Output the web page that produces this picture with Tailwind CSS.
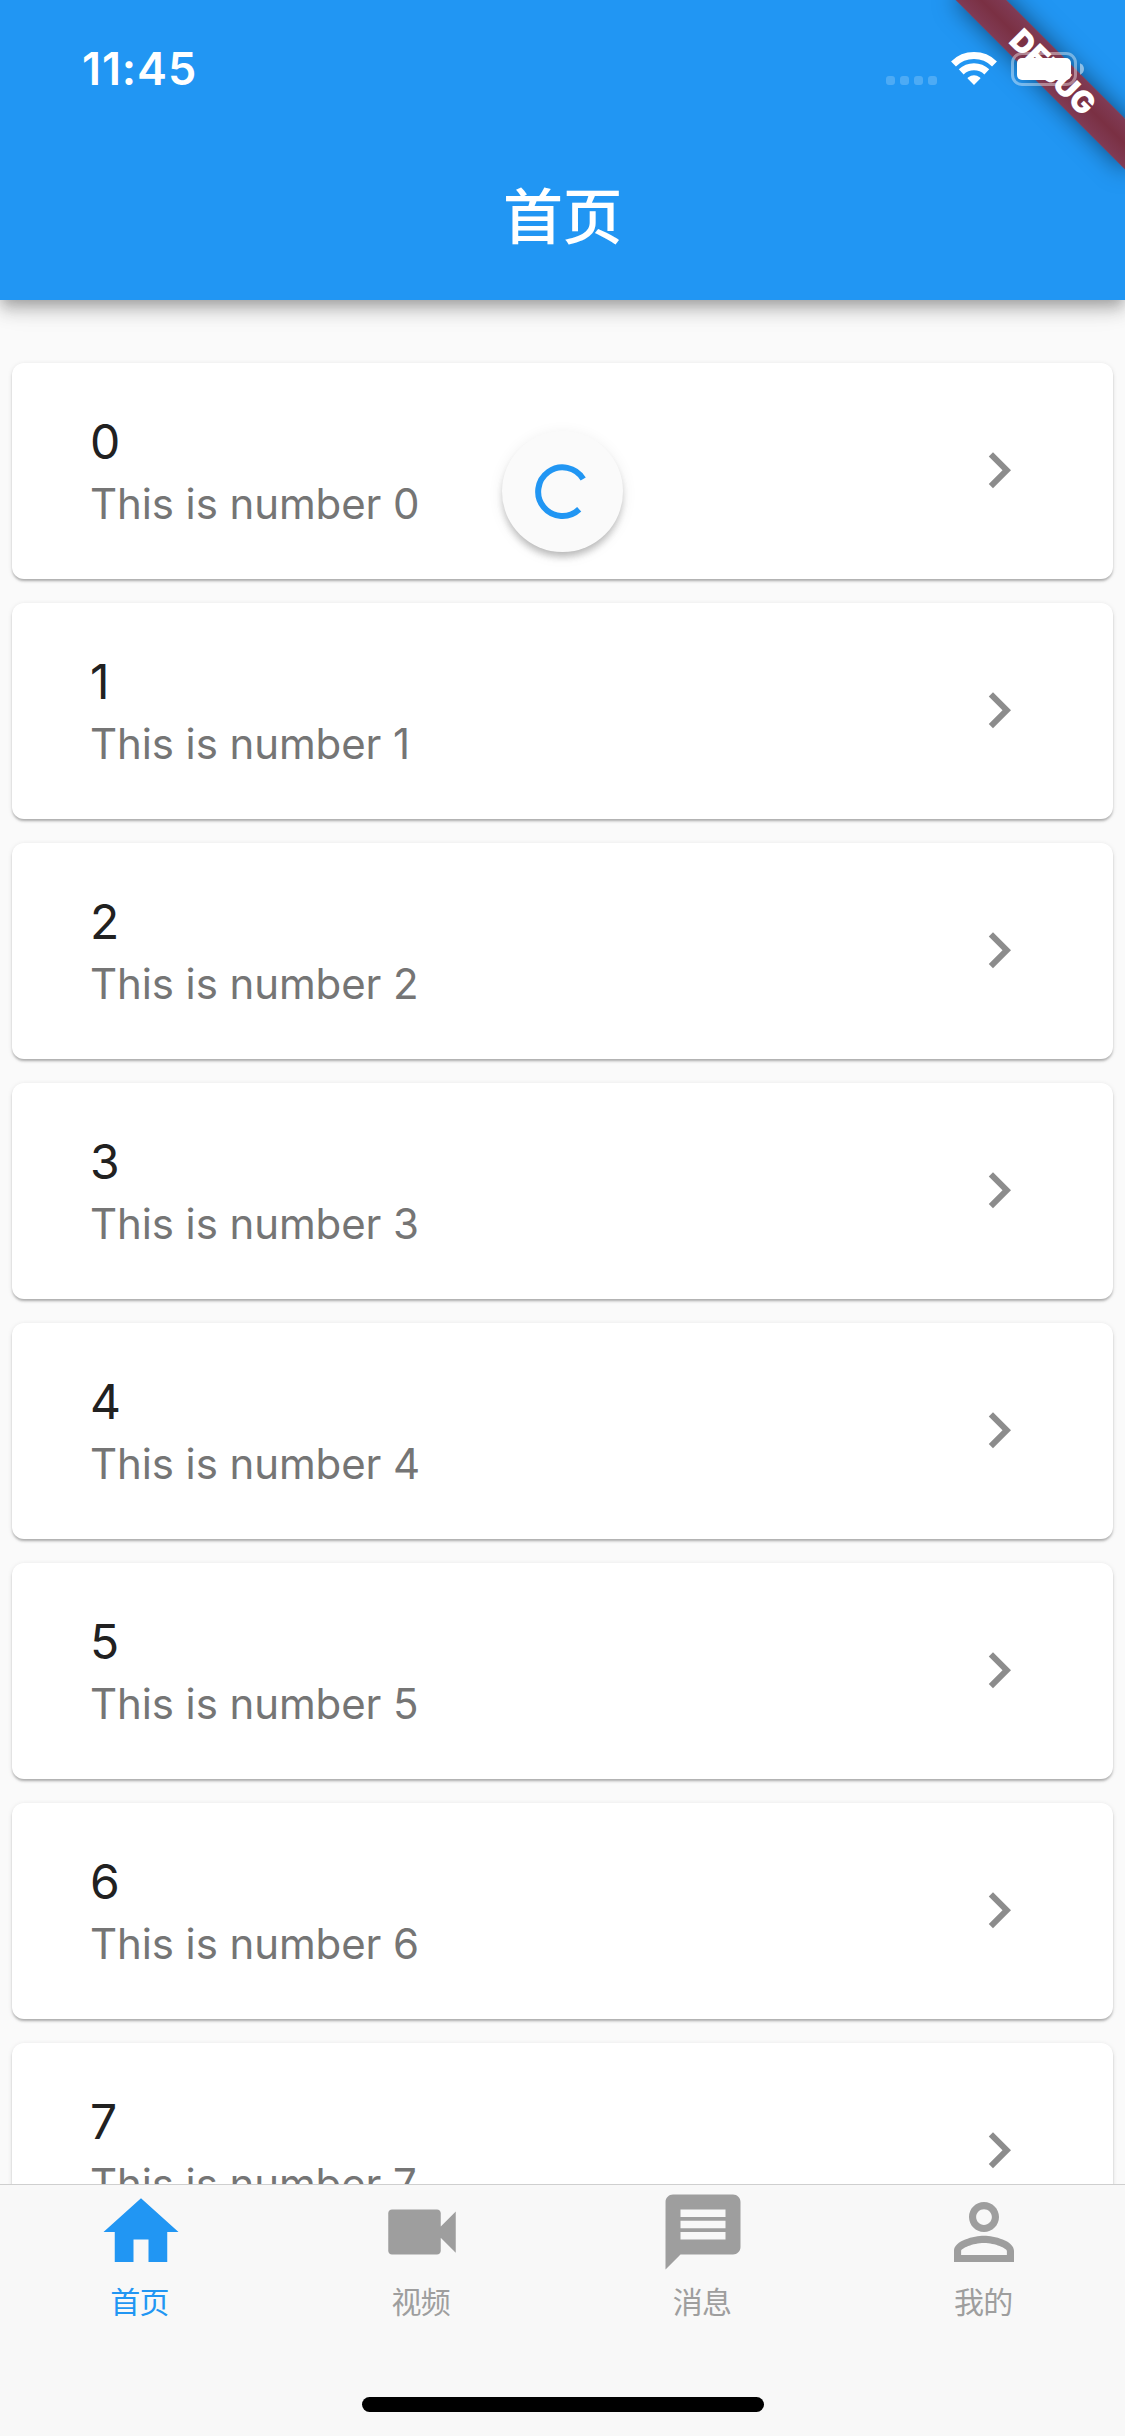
<!DOCTYPE html>
<html lang="zh-CN">
<head>
<meta charset="utf-8">
<title>首页</title>
<script src="https://cdn.jsdelivr.net/npm/@tailwindcss/browser@4"></script>
</head>
<body class="bg-[#fafafa]">
<div class="relative flex h-[2436px] w-[1125px] flex-col overflow-hidden bg-[#fafafa] font-['Inter','Noto_Sans_CJK_SC',sans-serif]">

  <header class="relative z-10 flex h-[300px] shrink-0 flex-col bg-[#2196f3] shadow-[0_6px_12px_-3px_rgba(0,0,0,0.2),0_12px_15px_rgba(0,0,0,0.14),0_3px_30px_rgba(0,0,0,0.12)]">
    <!-- debug ribbon -->
    <div class="absolute right-0 top-0 size-[220px] overflow-hidden">
      <div class="absolute left-[28px] top-[54px] flex h-9 w-[240px] rotate-45 items-center justify-center bg-linear-to-b from-[#803b55] via-[#7a3043] to-[#803b55] text-[30.6px] leading-none font-black text-white shadow-[0_0_24px_rgba(0,0,0,0.5)]">DEBUG</div>
    </div>
    <!-- status bar -->
    <div class="relative flex h-[132px] justify-between pl-[82px] pr-[41px]">
      <span class="pt-[43px] text-[45px] leading-[52px] font-semibold tracking-[0.9px] text-white">11:45</span>
      <div class="flex items-start pt-[52px]">
        <div class="mr-[14px] mt-6 flex gap-[5px]">
          <i class="size-[9px] rounded-[3px] bg-white/20"></i><i class="size-[9px] rounded-[3px] bg-white/20"></i><i class="size-[9px] rounded-[3px] bg-white/20"></i><i class="size-[9px] rounded-[3px] bg-white/20"></i>
        </div>
        <svg class="mr-[14px] h-[34px] w-[46px]" viewBox="0 0 46 34" fill="none">
          <path d="M2.5 11.9A29.3 29.3 0 0 1 43.5 11.9" stroke="#fff" stroke-width="7"/>
          <path d="M10.2 19.9A18.5 18.5 0 0 1 35.8 19.9" stroke="#fff" stroke-width="7"/>
          <path d="M23 33L16.6 26.6Q16.4 26 17 25.6A10 10 0 0 1 29 25.6Q29.6 26 29.4 26.6Z" fill="#fff"/>
        </svg>
        <svg class="h-[34px] w-[73px]" viewBox="0 0 73 34" fill="none">
          <rect x="1.5" y="1.5" width="63" height="31" rx="9.5" stroke="#fff" stroke-opacity=".4" stroke-width="3"/>
          <rect x="6" y="6" width="54" height="22" rx="5" fill="#fff"/>
          <path d="M69 11.2C71.5 12.2 73 14.4 73 17S71.5 21.800 69 22.800Z" fill="#fff" fill-opacity=".5"/>
        </svg>
      </div>
    </div>
    <h1 class="flex h-[168px] items-center justify-center pt-0.5 text-[60px] leading-none font-medium tracking-[-0.5px] text-white">首页</h1>
  </header>

  <main id="list" class="relative flex min-h-0 flex-1 flex-col gap-6 overflow-hidden px-3 pt-[63px]">
    <div class="absolute left-[502px] top-[131px] size-[121px] rounded-full bg-[#fafafa] shadow-[0_6px_9px_-3px_rgba(0,0,0,0.2),0_6px_6px_rgba(0,0,0,0.08),0_3px_15px_rgba(0,0,0,0.08)]">
      <svg class="size-full" viewBox="0 0 121 121" fill="none"><path d="M77.200 78.300A24.300 24.300 0 1 1 81.200 48" stroke="#2196f3" stroke-width="6"/></svg>
    </div>
  </main>

  <nav class="relative grid h-[252px] shrink-0 grid-cols-4 border-t border-[#cfcfcf] bg-[#f8f8f8] text-[#9e9e9e]">
    <div class="flex flex-col items-center pt-[2px] text-[#2196f3]">
      <svg class="size-[90px]" viewBox="0 0 24 24" fill="currentColor"><path d="M10 20v-6h4v6h5v-8h3L12 3 2 12h3v8z"/></svg>
      <span class="pr-0.5 pt-[3px] text-[30px] leading-[44px] tracking-[-0.72px]">首页</span>
    </div>
    <div class="flex flex-col items-center pt-[2px]">
      <svg class="size-[90px]" viewBox="0 0 24 24" fill="currentColor"><path d="M17 10.500V7c0-.55-.45-1-1-1H4c-.55 0-1 .45-1 1v10c0 .55.45 1 1 1h12c.55 0 1-.45 1-1v-3.500l4 4v-11l-4 4z"/></svg>
      <span class="pr-0.5 pt-[3px] text-[30px] leading-[44px] tracking-[-0.72px]">视频</span>
    </div>
    <div class="flex flex-col items-center pt-[2px]">
      <svg class="size-[90px]" viewBox="0 0 24 24" fill="currentColor"><path d="M20 2H4c-1.100 0-1.990.9-1.990 2L2 22l4-4h14c1.100 0 2-.9 2-2V4c0-1.100-.9-2-2-2zm-2 12H6v-2h12v2zm0-3H6V9h12v2zm0-3H6V6h12v2z"/></svg>
      <span class="pr-0.5 pt-[3px] text-[30px] leading-[44px] tracking-[-0.72px]">消息</span>
    </div>
    <div class="flex flex-col items-center pt-[2px]">
      <svg class="size-[90px]" viewBox="0 0 24 24" fill="currentColor"><path d="M12 5.900c1.160 0 2.100.94 2.100 2.100s-.94 2.100-2.100 2.100S9.900 9.160 9.900 8s.94-2.100 2.100-2.100m0 9c2.970 0 6.100 1.460 6.100 2.100v1.100H5.900V17c0-.64 3.130-2.100 6.100-2.100M12 4C9.790 4 8 5.790 8 8s1.790 4 4 4 4-1.790 4-4-1.790-4-4-4zm0 9c-2.670 0-8 1.340-8 4v3h16v-3c0-2.660-5.330-4-8-4z"/></svg>
      <span class="pr-0.5 pt-[3px] text-[30px] leading-[44px] tracking-[-0.72px]">我的</span>
    </div>
    <div class="absolute bottom-6 left-[362px] h-[15px] w-[402px] rounded-full bg-black"></div>
  </nav>
</div>

<template id="row">
  <div class="flex h-[216px] shrink-0 justify-between rounded-xl bg-white px-[78px] shadow-[0_3px_3px_-1px_rgba(0,0,0,0.18),0_2px_2px_rgba(0,0,0,0.1),0_1px_5px_rgba(0,0,0,0.1)]">
    <div class="flex flex-col pt-[50px]">
      <span class="text-[48px] leading-[57px] text-[#212121]" data-title></span>
      <span class="text-[42px] leading-[67px] tracking-[-0.1px] text-[#757575]" data-sub></span>
    </div>
    <svg class="size-[72px] self-center" viewBox="0 0 24 24" fill="#8c8c8c"><path d="M8.590 16.340l4.580-4.590-4.580-4.590L10 5.750l6 6-6 6z"/></svg>
  </div>
</template>
<script>
  const list = document.getElementById('list');
  const spinner = list.firstElementChild;
  for (let n = 0; n < 8; n++) {
    const row = document.getElementById('row').content.cloneNode(true);
    row.querySelector('[data-title]').textContent = n;
    row.querySelector('[data-sub]').textContent = 'This is number ' + n;
    list.insertBefore(row, spinner);
  }
</script>
</body>
</html>
